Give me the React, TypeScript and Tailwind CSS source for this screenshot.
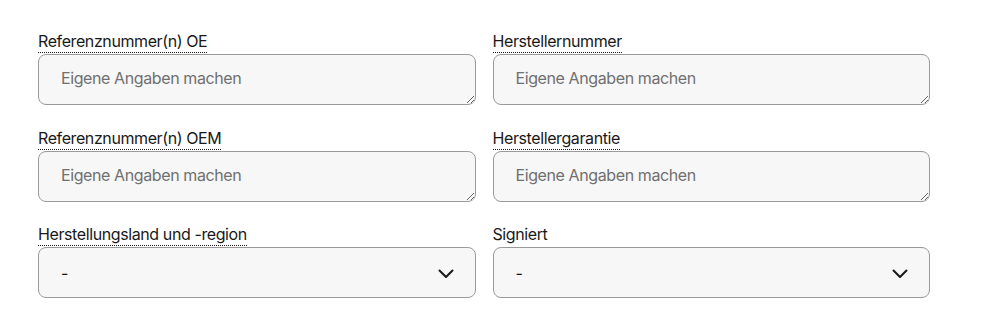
import React from "react";

const font = { fontFamily: "Inter, 'Noto Sans', sans-serif", letterSpacing: "-0.4px" };

function Label({ text, dotted = true }: { text: string; dotted?: boolean }) {
  return (
    <div className="h-[21px]">
      <span
        className={
          "inline-block h-[21px] text-[16px] leading-[18px] text-[#191919] " +
          (dotted ? "border-b border-dotted border-[#191919]" : "")
        }
      >
        {text}
      </span>
    </div>
  );
}

function TextField({ label }: { label: string }) {
  return (
    <div className="flex flex-col">
      <Label text={label} />
      <textarea
        placeholder="Eigene Angaben machen"
        className="mt-[4px] h-[51px] w-full rounded-[8px] border border-[#9a9a9a] bg-[#f7f7f7] pl-[22px] pr-4 pt-[13px] text-[16px] leading-[20px] text-[#191919] placeholder:text-[#707070] outline-none"
        style={font}
      />
    </div>
  );
}

function SelectField({ label, dotted = true }: { label: string; dotted?: boolean }) {
  return (
    <div className="flex flex-col">
      <Label text={label} dotted={dotted} />
      <div className="mt-[4px] flex h-[51px] w-full items-center justify-between rounded-[8px] border border-[#9a9a9a] bg-[#f7f7f7] pl-[22px] pr-[21px]">
        <span className="text-[16px] leading-[20px] text-[#191919]">-</span>
        <svg width="16" height="10" viewBox="0 0 16 10" fill="none" className="mt-[2px]">
          <polyline points="1.5,1.5 8,8 14.5,1.5" stroke="#191919" strokeWidth="2" strokeLinecap="round" strokeLinejoin="round" />
        </svg>
      </div>
    </div>
  );
}

export default function App() {
  return (
    <div className="min-h-[322px] w-[999px] bg-white pl-[38px] pt-[29px]" style={font}>
      <div className="grid w-[892px] grid-cols-2 gap-x-[17px] gap-y-[20.5px]">
        <TextField label="Referenznummer(n) OE" />
        <TextField label="Herstellernummer" />
        <TextField label="Referenznummer(n) OEM" />
        <TextField label="Herstellergarantie" />
        <SelectField label="Herstellungsland und -region" />
        <SelectField label="Signiert" dotted={false} />
      </div>
    </div>
  );
}
